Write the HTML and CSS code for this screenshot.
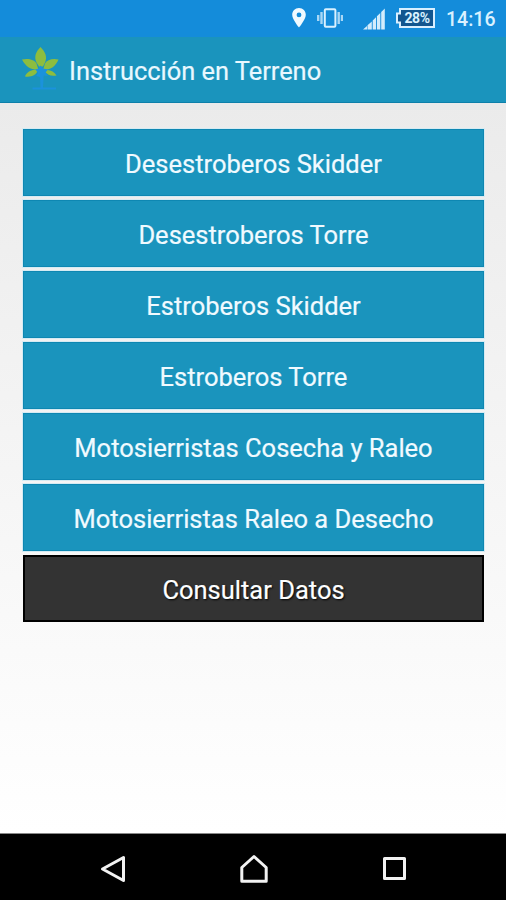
FILE: index.html
```html
<!DOCTYPE html>
<html lang="es">
<head>
<meta charset="utf-8">
<title>Instrucción en Terreno</title>
<link rel="stylesheet" href="styles.css">
</head>
<body>
<div class="screen">
  <div class="status">
    <svg class="pin" width="14" height="20" viewBox="0 0 14 20"><path fill="#f0faff" fill-rule="evenodd" d="M7 0C3 0 .2 3 .2 6.800C.2 11.500 7 19.500 7 19.500S13.800 11.500 13.800 6.800C13.800 3 11 0 7 0ZM7 4.500A2.400 2.400 0 1 1 7 9.300A2.400 2.400 0 1 1 7 4.500Z"/></svg>
    <svg class="vibrate" width="26" height="20" viewBox="0 0 26 20"><rect x="7.800" y="1.300" width="10.600" height="17.400" rx="1" fill="none" stroke="#d9f1ff" stroke-width="2"/><path stroke="#a9d7f5" stroke-width="2.400" d="M4.500 4V16M21.700 4V16M1.200 7V13M25 7V13"/></svg>
    <svg class="signal" width="22" height="22" viewBox="0 0 22 22"><path fill="#d3ecfc" d="M0 21.500L4 18V21.500ZM4.500 17.300L8.800 13.500V21.500H4.500ZM9.700 12.500L13 9.200V21.500H9.700ZM13.900 8.300L17.300 5V21.500H13.900ZM18.200 4L21.800 .4V21.500H18.200Z"/></svg>
    <div class="battery">
      <svg width="40" height="20" viewBox="0 0 40 20"><path fill="#12568f" stroke="#d9efff" stroke-width="2" d="M4 1H38V19H4V14.500H1V5.500H4Z"/></svg>
      <span>28%</span>
    </div>
    <span class="clock">14:16</span>
  </div>
  <header class="bar">
    <svg class="logo" width="38" height="44" viewBox="0 0 38 44">
      <path fill="#8dbd3f" d="M18.500 0C23.500 5 25.500 10 23 15.500L21 19.500H17L14.500 15.500C12 10 13.500 5 18.500 0ZM0 12.500C6 11 12.500 12.500 14.500 16.500L16.500 23C9 23 3.500 19.500 0 12.500ZM36.500 12.500C31 11 25 12.500 23 16.500L21 23C28.500 23 33.500 19.500 36.500 12.500ZM3 29.500C5 24.500 10 22 16 23.500C14 28 9.500 30.500 3 29.500ZM34.500 28.500C32 24.500 27.500 22 22 23.500C25 28 29 29.500 34.500 28.500Z"/>
      <path fill="#1b92dc" d="M13.500 22.500L16.500 21.500L18.700 18.500L21 21.500L26 22.500L23.500 25.500L26 29L21.700 28.500L21 40.500H34V42.500H10.500V40.500H18.500L18 30L14 29L16 26Z"/>
    </svg>
    <h1>Instrucción en Terreno</h1>
  </header>
  <main class="menu">
    <button>Desestroberos Skidder</button>
    <button>Desestroberos Torre</button>
    <button>Estroberos Skidder</button>
    <button>Estroberos Torre</button>
    <button>Motosierristas Cosecha y Raleo</button>
    <button>Motosierristas Raleo a Desecho</button>
    <button class="dark">Consultar Datos</button>
  </main>
  <nav class="nav">
    <svg width="28" height="30" viewBox="0 0 28 30"><path d="M23.500 3.500V26.500L2.500 15Z"/></svg>
    <svg width="30" height="30" viewBox="0 0 30 30"><path d="M14 2.500L26.200 13.500V27.200H1.800V13.500Z"/></svg>
    <svg width="26" height="26" viewBox="0 0 26 26"><path d="M2.500 2.500H22.500V22.500H2.500Z"/></svg>
  </nav>
</div>
</body>
</html>
```
FILE: styles.css
```css
* { box-sizing: border-box; }
body { margin: 0; font-family: Roboto, sans-serif; }
svg { display: block; flex: none; }
.screen {
  width: 506px;
  height: 900px;
  display: flex;
  flex-direction: column;
  overflow: hidden;
}
.status {
  height: 37px;
  flex: none;
  display: flex;
  align-items: flex-start;
  padding: 8px 0 0 292px;
  background: #148cda;
  color: #d9f1ff;
}
.vibrate { margin-left: 11px; }
.signal { margin-left: 20px; }
.battery { position: relative; width: 40px; margin-left: 11px; }
.battery span {
  position: absolute;
  left: 3px;
  right: 1px;
  top: 2px;
  line-height: 16px;
  text-align: center;
  font-size: 14px;
  font-weight: 700;
  letter-spacing: -0.4px;
}
.clock {
  margin-left: 10px;
  font-size: 19.5px;
  font-weight: 500;
  line-height: 23px;
  white-space: nowrap;
}
.bar {
  height: 66px;
  flex: none;
  display: flex;
  padding-left: 22px;
  background: #1a94bd;
  border-bottom: 1px solid #0e80aa;
}
.logo { margin-top: 10px; }
h1 {
  margin: 0 0 0 9px;
  font-size: 25.4px;
  font-weight: 400;
  line-height: 68px;
  color: #e9f8ff;
  -webkit-text-stroke: 0.2px #e9f8ff;
  white-space: nowrap;
}
.menu {
  flex: 1;
  display: flex;
  flex-direction: column;
  gap: 4px;
  padding: 26px 22px 0 23px;
  background: linear-gradient(#ebebeb, #fff);
}
button {
  height: 67px;
  padding: 4px 0 0;
  border: 1px solid #0e87b2;
  background: #1a94bd;
  box-shadow: 0 0 0 1px #d5ebf3;
  color: #f0faff;
  font: 400 25.5px/1 Roboto, sans-serif;
  -webkit-text-stroke: 0.2px #f0faff;
  white-space: nowrap;
}
.dark {
  border: 2px solid #000;
  background: #333;
  box-shadow: none;
  color: #fff;
  text-shadow: 1px 1px 2px #000;
}
.nav {
  height: 67px;
  flex: none;
  display: flex;
  align-items: center;
  justify-content: space-between;
  padding: 4px 98px 0 100px;
  border-top: 1px solid #888;
  background: #000;
}
.nav path { fill: none; stroke: #f2f2f2; stroke-width: 3; stroke-linejoin: round; }
```
